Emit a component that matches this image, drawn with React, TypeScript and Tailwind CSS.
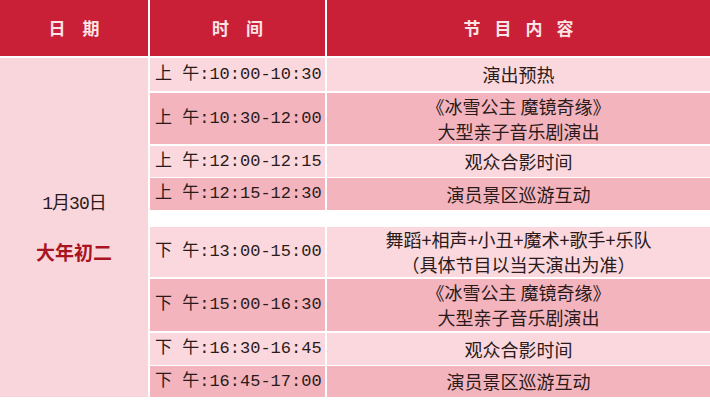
import React from "react";

const mono = { fontFamily: '"Liberation Mono", "Noto Sans CJK SC", monospace' };

type Row = { time: string; lines: string[]; h: string; dark: boolean; mb: string };

const top: Row[] = [
  { time: "上 午:10:00-10:30", lines: ["演出预热"], h: "h-[33px]", dark: false, mb: "mb-[2px]" },
  { time: "上 午:10:30-12:00", lines: ["《冰雪公主 魔镜奇缘》", "大型亲子音乐剧演出"], h: "h-[51px]", dark: true, mb: "mb-[2px]" },
  { time: "上 午:12:00-12:15", lines: ["观众合影时间"], h: "h-[31px]", dark: false, mb: "mb-[1px]" },
  { time: "上 午:12:15-12:30", lines: ["演员景区巡游互动"], h: "h-[32px]", dark: true, mb: "mb-0" },
];
const bottom: Row[] = [
  { time: "下 午:13:00-15:00", lines: ["舞蹈+相声+小丑+魔术+歌手+乐队", "（具体节目以当天演出为准）"], h: "h-[50px]", dark: false, mb: "mb-[2px]" },
  { time: "下 午:15:00-16:30", lines: ["《冰雪公主 魔镜奇缘》", "大型亲子音乐剧演出"], h: "h-[52px]", dark: true, mb: "mb-[2px]" },
  { time: "下 午:16:30-16:45", lines: ["观众合影时间"], h: "h-[32px]", dark: false, mb: "mb-[1px]" },
  { time: "下 午:16:45-17:00", lines: ["演员景区巡游互动"], h: "h-[31px]", dark: true, mb: "mb-0" },
];

function RowView({ r }: { r: Row }) {
  const bg = r.dark ? "bg-[#f3b4bd]" : "bg-[#fad8dd]";
  return (
    <div className={`flex ${r.h} ${r.mb}`}>
      <div
        className={`w-[175px] shrink-0 ${bg} flex items-center pl-[5px] text-[17px] whitespace-nowrap text-[#2a1a1a]`}
        style={mono}
      >
        {r.time}
      </div>
      <div className={`ml-[2px] flex-1 ${bg} flex flex-col items-center justify-center text-[18px] leading-[25px] text-[#2a1a1a]`}>
        {r.lines.map((l, i) => (
          <div key={i} className="whitespace-nowrap">{l}</div>
        ))}
      </div>
    </div>
  );
}

export default function App() {
  return (
    <div
      className="w-[710px] h-[401px] bg-white overflow-hidden"
      style={{ fontFamily: '"Noto Sans CJK SC", "Noto Sans", sans-serif' }}
    >
      <div className="flex h-[56px] bg-white">
        <div className="w-[148px] shrink-0 bg-[#c91f37] flex items-center justify-center text-[#fbe4e6] font-bold text-[17px] tracking-[17px] pl-[17px]">
          日期
        </div>
        <div className="ml-[2px] w-[175px] shrink-0 bg-[#c91f37] flex items-center justify-center text-[#fbe4e6] font-bold text-[17px] tracking-[17px] pl-[17px]">
          时间
        </div>
        <div className="ml-[2px] flex-1 bg-[#c91f37] flex items-center justify-center text-[#fbe4e6] font-bold text-[17px] tracking-[14px] pl-[14px]">
          节目内容
        </div>
      </div>
      <div className="flex mt-[2px] h-[339px]">
        <div className="w-[148px] shrink-0 bg-[#f9d6db] flex flex-col items-center justify-center gap-[20px] pt-[2px]">
          <div className="text-[18px] text-[#2a1a1a] whitespace-nowrap" style={mono}>
            <span className="tracking-[-1px]">1月30日</span>
          </div>
          <div className="text-[19px] font-bold text-[#a8141f]">大年初二</div>
        </div>
        <div className="ml-[2px] flex-1 flex flex-col">
          {top.map((r, i) => (
            <RowView key={i} r={r} />
          ))}
          <div className="h-[17px]" />
          {bottom.map((r, i) => (
            <RowView key={i} r={r} />
          ))}
        </div>
      </div>
    </div>
  );
}
